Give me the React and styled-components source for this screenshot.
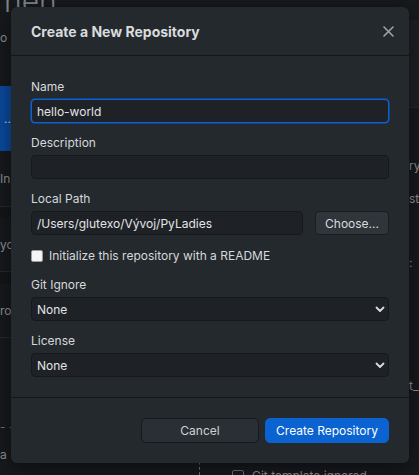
import React from "react";
import styled, { createGlobalStyle } from "styled-components";

const Global = createGlobalStyle`
  html, body { margin: 0; padding: 0; }
  body {
    width: 419px;
    height: 475px;
    overflow: hidden;
    background: #17191d;
    font-family: Inter, "Noto Sans", sans-serif;
    color: #d8dadc;
  }
  * { box-sizing: border-box; }
`;

/* ---------- dimmed app behind the dialog ---------- */

const Backdrop = styled.div`
  position: relative;
  width: 419px;
  height: 475px;
  display: flex;
  justify-content: space-between;
  background: #17191d;
  overflow: hidden;
`;

const SideList = styled.div`
  width: 11px;
  display: flex;
  flex-direction: column;
  color: #8d9196;
  font-size: 12px;
  white-space: nowrap;
`;

const BigTitle = styled.div`
  font-size: 30px;
  font-weight: 300;
  line-height: 14px;
  height: 14px;
  flex-shrink: 0;
  color: #85898e;
  margin-top: -6px;
  padding-left: 4px;
`;

const SideItem = styled.div`
  height: ${(p) => p.h}px;
  flex-shrink: 0;
  display: flex;
  align-items: center;
  justify-content: ${(p) => (p.end ? "flex-end" : "flex-start")};
  background: ${(p) => p.bg || "transparent"};
  border-bottom: ${(p) => (p.line ? "1px solid #24282d" : "none")};
  color: ${(p) => p.color || "#8d9196"};
`;

const RightPane = styled.div`
  width: 10px;
  display: flex;
  flex-direction: column;
  color: #8d9196;
  font-size: 12px;
  white-space: nowrap;
`;

const RightBand = styled.div`
  height: ${(p) => p.h}px;
  flex-shrink: 0;
  background: ${(p) => p.bg || "transparent"};
  border-bottom: ${(p) => (p.line ? "1px solid #24282d" : "none")};
  display: flex;
  align-items: center;
`;

const BottomHint = styled.div`
  position: absolute;
  left: 199px;
  top: 446px;
  display: flex;
  align-items: flex-start;
  color: #8a8e93;
  font-size: 12px;
  white-space: nowrap;
`;

const DashV = styled.div`
  width: 1px;
  height: 29px;
  border-left: 1px dashed #6a6e73;
  margin-right: 32px;
`;

const MiniCheck = styled.div`
  width: 12px;
  height: 12px;
  border: 1px solid #6a6e73;
  border-radius: 2px;
  margin: 24px 8px 0 0;
`;

const HintText = styled.span`
  margin-top: 22px;
`;

/* ---------- dialog ---------- */

const Dialog = styled.div`
  position: absolute;
  left: 11px;
  top: 7px;
  width: 398px;
  height: 456px;
  background: #24292e;
  border-radius: 6px;
  box-shadow: 0 4px 20px rgba(0, 0, 0, 0.5);
  display: flex;
  flex-direction: column;
`;

const Header = styled.div`
  height: 49px;
  flex-shrink: 0;
  display: flex;
  align-items: center;
  justify-content: space-between;
  padding: 0 14px 0 20px;
  border-bottom: 1px solid #141619;
`;

const Title = styled.h1`
  margin: 0;
  font-size: 14px;
  font-weight: 700;
  color: #d9dbdd;
`;

const Close = styled.button`
  background: none;
  border: 0;
  padding: 0;
  width: 14px;
  height: 14px;
  display: flex;
  align-items: center;
  justify-content: center;
`;

const Body = styled.div`
  flex: 1;
  padding: 23px 20px 0;
  display: flex;
  flex-direction: column;
`;

const Field = styled.div`
  display: flex;
  flex-direction: column;
  gap: 4px;
  margin-bottom: ${(p) => p.mb ?? 12}px;
`;

const Label = styled.label`
  font-size: 12px;
  line-height: 16px;
  color: #d6d8da;
`;

const Input = styled.div`
  height: 24px;
  flex: ${(p) => (p.grow ? "1 1 auto" : "0 0 auto")};
  display: flex;
  align-items: center;
  padding: 0 5px;
  font-size: 12px;
  color: #e2e4e6;
  background: #1e2226;
  border: 1px solid ${(p) => (p.focus ? "#0b62d6" : "#16191c")};
  border-radius: 4px;
  box-shadow: ${(p) => (p.focus ? "0 0 0 0.5px #0b62d6" : "none")};
`;

const Row = styled.div`
  display: flex;
  gap: 12px;
`;

const SmallButton = styled.button`
  width: 74px;
  height: 24px;
  flex-shrink: 0;
  border-radius: 4px;
  background: #30343b;
  border: 1px solid #1a1d20;
  color: #d9dbdd;
  font-family: inherit;
  font-size: 12px;
  padding: 0;
`;

const CheckRow = styled.label`
  display: flex;
  align-items: center;
  gap: 6px;
  font-size: 12px;
  color: #d6d8da;
  margin: 13px 0 14px;
`;

const Box = styled.span`
  width: 12px;
  height: 12px;
  border-radius: 2px;
  background: #f4f4f4;
  border: 1px solid #9a9ea3;
`;

const Select = styled(Input)`
  justify-content: space-between;
  padding-right: 3px;
`;

const Footer = styled.div`
  height: 66px;
  flex-shrink: 0;
  border-top: 1px solid #141619;
  display: flex;
  align-items: center;
  justify-content: flex-end;
  gap: 6px;
  padding: 0 20px 1px;
`;

const Button = styled.button`
  height: 25px;
  width: ${(p) => p.w}px;
  border-radius: 5px;
  font-family: inherit;
  font-size: 12px;
  padding: 0;
  color: ${(p) => (p.primary ? "#ffffff" : "#cfd1d3")};
  background: ${(p) => (p.primary ? "#0a63d1" : "#2a2f35")};
  border: 1px solid ${(p) => (p.primary ? "#0a63d1" : "#16181b")};
`;

const Chevron = () => (
  <svg width="10" height="10" viewBox="0 0 10 10">
    <path d="M1.5 3.5 L5 7 L8.5 3.5" fill="none" stroke="#d9dbdd" strokeWidth="1.8" strokeLinecap="round" strokeLinejoin="round" />
  </svg>
);

export default function App() {
  return (
    <>
      <Global />
      <Backdrop>
        <SideList>
          <BigTitle>nen</BigTitle>
          <SideItem h={58}>o</SideItem>
          <SideItem h={20} />
          <SideItem h={65} bg="#0a4a9e" color="#c9d6ea" end>..</SideItem>
          <SideItem h={56} line>In</SideItem>
          <SideItem h={11} bg="#141619" />
          <SideItem h={54} line>yo</SideItem>
          <SideItem h={12} bg="#141619" />
          <SideItem h={54} line>ro</SideItem>
          <SideItem h={80} />
          <SideItem h={16} color="#6a6e73">- -</SideItem>
          <SideItem h={41}>a</SideItem>
        </SideList>
        <RightPane>
          <RightBand h={20} />
          <RightBand h={88} bg="#1d2024" line />
          <RightBand h={45} />
          <RightBand h={24}>ry</RightBand>
          <RightBand h={10} />
          <RightBand h={22}>st</RightBand>
          <RightBand h={42} />
          <RightBand h={22}>:</RightBand>
          <RightBand h={101} />
          <RightBand h={22}>t_</RightBand>
        </RightPane>
        <BottomHint>
          <DashV />
          <MiniCheck />
          <HintText>Git template ignored</HintText>
        </BottomHint>

        <Dialog>
          <Header>
            <Title>Create a New Repository</Title>
            <Close aria-label="Close">
              <svg width="11" height="11" viewBox="0 0 11 11">
                <path d="M1 1 L10 10 M10 1 L1 10" stroke="#9fa3a7" strokeWidth="1.6" strokeLinecap="round" />
              </svg>
            </Close>
          </Header>
          <Body>
            <Field>
              <Label>Name</Label>
              <Input focus>hello-world</Input>
            </Field>
            <Field>
              <Label>Description</Label>
              <Input />
            </Field>
            <Field mb={0}>
              <Label>Local Path</Label>
              <Row>
                <Input grow>/Users/glutexo/Vývoj/PyLadies</Input>
                <SmallButton>Choose...</SmallButton>
              </Row>
            </Field>
            <CheckRow>
              <Box />
              Initialize this repository with a README
            </CheckRow>
            <Field>
              <Label>Git Ignore</Label>
              <Select>
                None
                <Chevron />
              </Select>
            </Field>
            <Field>
              <Label>License</Label>
              <Select>
                None
                <Chevron />
              </Select>
            </Field>
          </Body>
          <Footer>
            <Button w={118}>Cancel</Button>
            <Button primary w={124}>Create Repository</Button>
          </Footer>
        </Dialog>
      </Backdrop>
    </>
  );
}
